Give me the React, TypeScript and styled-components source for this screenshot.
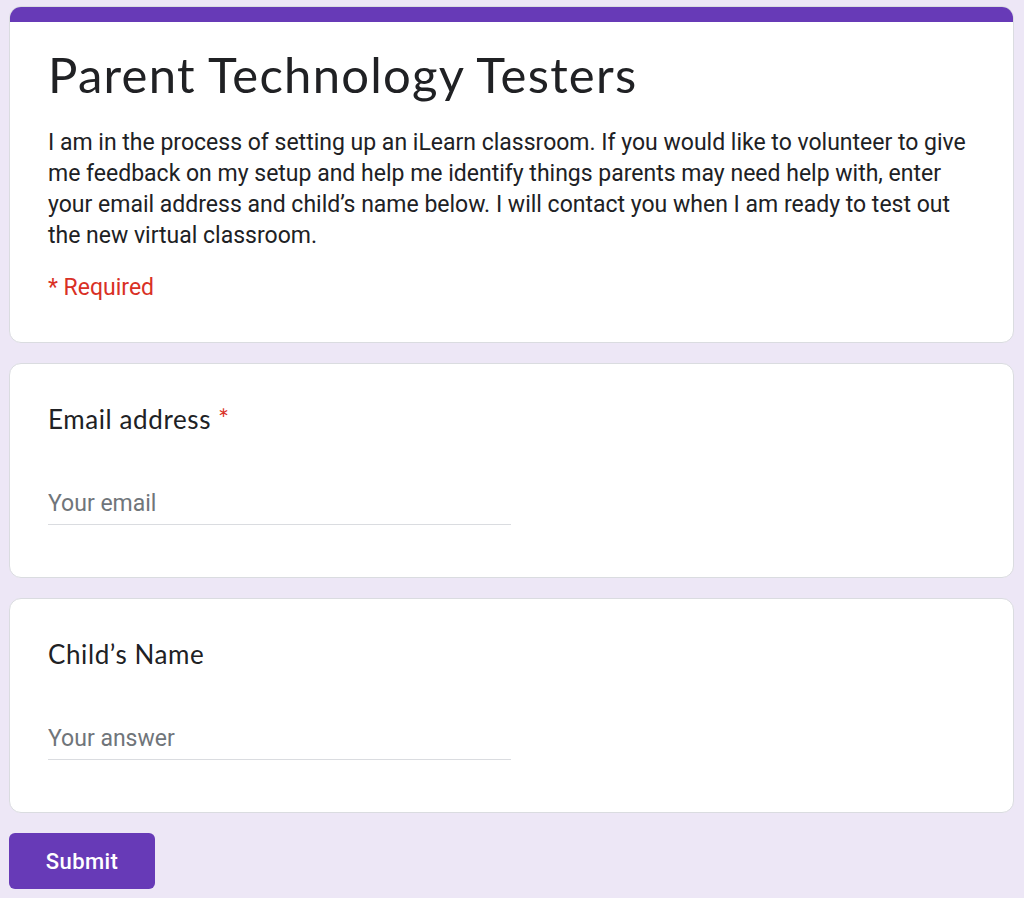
import * as React from 'react';
import styled, { createGlobalStyle } from 'styled-components';

const GlobalStyle = createGlobalStyle`
    html, body {
        margin: 0;
        padding: 0;
        background: #ede7f6;
    }
    * {
        box-sizing: border-box;
    }
`;

const HEAD_FONT = `Lato, "Open Sans", sans-serif`;
const BODY_FONT = `Roboto, "Liberation Sans", Arial, sans-serif`;

const Page = styled.div`
    display: flex;
    flex-direction: column;
    gap: 20px;
    padding: 6px 10px 20px 9px;
    min-height: 898px;
`;

const Card = styled.div`
    background: #fff;
    border: 1px solid #dadce0;
    border-radius: 12px;
    overflow: hidden;
`;

const AccentBar = styled.div`
    height: 15px;
    background: #673ab7;
`;

const HeaderBody = styled.div`
    padding: 22px 38px 39px;
`;

const Title = styled.h1`
    margin: 0;
    font-family: ${HEAD_FONT};
    font-weight: 400;
    font-size: 49px;
    line-height: 60px;
    letter-spacing: 1.25px;
    color: #202124;
`;

const Description = styled.p`
    margin: 23px 0 0;
    font-family: ${BODY_FONT};
    font-size: 23px;
    line-height: 31px;
    color: #202124;
`;

const RequiredNote = styled.div`
    margin-top: 21px;
    font-family: ${BODY_FONT};
    font-size: 23px;
    line-height: 31px;
    color: #d93025;
`;

const QuestionBody = styled.div`
    padding: 37px 38px 52px;
    display: flex;
    flex-direction: column;
    gap: 51px;
`;

const Label = styled.div`
    font-family: ${HEAD_FONT};
    font-size: 26px;
    line-height: 36px;
    letter-spacing: 0.6px;
    color: #202124;
`;

const Star = styled.span`
    color: #d93025;
    margin-left: 7px;
`;

const TextInput = styled.input`
    width: 463px;
    padding: 0 0 5px;
    border: none;
    border-bottom: 1px solid #dadce0;
    outline: none;
    background: transparent;
    font-family: ${BODY_FONT};
    font-size: 23px;
    line-height: 31px;
    color: #202124;

    &::placeholder {
        color: #70757a;
    }
`;

const Actions = styled.div`
    display: flex;
`;

const SubmitButton = styled.button`
    width: 146px;
    height: 56px;
    border: none;
    border-radius: 6px;
    background: #673ab7;
    color: #fff;
    font-family: ${BODY_FONT};
    font-size: 22px;
    font-weight: 500;
    letter-spacing: 0.4px;
    cursor: pointer;
`;

const Question = ({ label, placeholder, required }: { label: string; placeholder: string; required?: boolean }) => (
    <Card>
        <QuestionBody>
            <Label>
                {label}
                {required && <Star>*</Star>}
            </Label>
            <TextInput placeholder={placeholder} />
        </QuestionBody>
    </Card>
);

export default function App() {
    return (
        <>
            <GlobalStyle />
            <Page>
                <Card>
                    <AccentBar />
                    <HeaderBody>
                        <Title>Parent Technology Testers</Title>
                        <Description>
                            I am in the process of setting up an iLearn classroom. If you would like to volunteer to give
                            me feedback on my setup and help me identify things parents may need help with, enter
                            your email address and child’s name below. I will contact you when I am ready to test out
                            the new virtual classroom.
                        </Description>
                        <RequiredNote>* Required</RequiredNote>
                    </HeaderBody>
                </Card>

                <Question label="Email address" placeholder="Your email" required />
                <Question label="Child’s Name" placeholder="Your answer" />

                <Actions>
                    <SubmitButton type="button">Submit</SubmitButton>
                </Actions>
            </Page>
        </>
    );
}
